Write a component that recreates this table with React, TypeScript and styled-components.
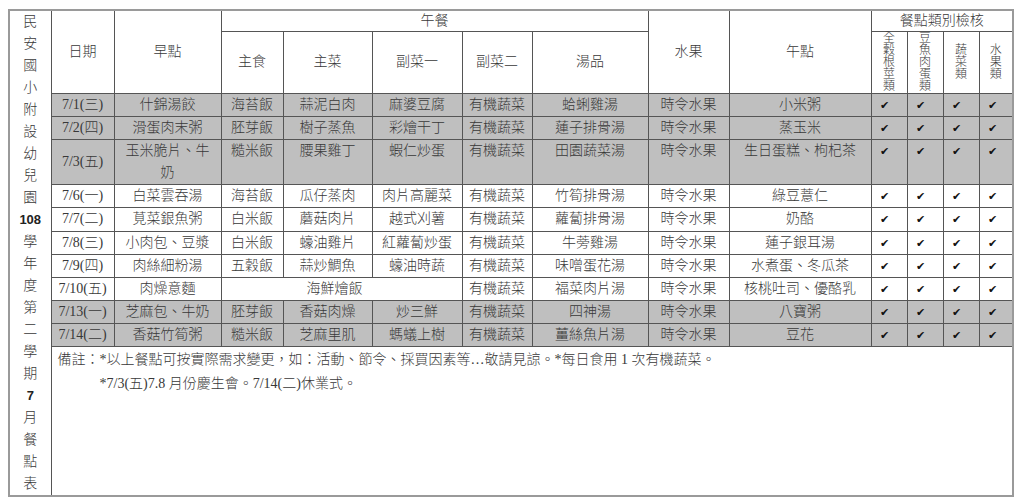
import React from 'react';
import styled, { createGlobalStyle } from 'styled-components';

type MenuRow = {
  date: string;
  breakfast: string;
  staple?: string;
  main?: string;
  side1?: string;
  merged?: string;
  side2: string;
  soup: string;
  fruit: string;
  snack: string;
  shaded?: boolean;
  tall?: boolean;
};

const rows: MenuRow[] = [
  { date: '7/1(三)', breakfast: '什錦湯餃', staple: '海苔飯', main: '蒜泥白肉', side1: '麻婆豆腐', side2: '有機蔬菜', soup: '蛤蜊雞湯', fruit: '時令水果', snack: '小米粥', shaded: true },
  { date: '7/2(四)', breakfast: '滑蛋肉末粥', staple: '胚芽飯', main: '樹子蒸魚', side1: '彩燴干丁', side2: '有機蔬菜', soup: '蓮子排骨湯', fruit: '時令水果', snack: '蒸玉米', shaded: true },
  { date: '7/3(五)', breakfast: '玉米脆片、牛|奶', staple: '糙米飯', main: '腰果雞丁', side1: '蝦仁炒蛋', side2: '有機蔬菜', soup: '田園蔬菜湯', fruit: '時令水果', snack: '生日蛋糕、枸杞茶', shaded: true, tall: true },
  { date: '7/6(一)', breakfast: '白菜雲吞湯', staple: '海苔飯', main: '瓜仔蒸肉', side1: '肉片高麗菜', side2: '有機蔬菜', soup: '竹筍排骨湯', fruit: '時令水果', snack: '綠豆薏仁' },
  { date: '7/7(二)', breakfast: '莧菜銀魚粥', staple: '白米飯', main: '蘑菇肉片', side1: '越式刈薯', side2: '有機蔬菜', soup: '蘿蔔排骨湯', fruit: '時令水果', snack: '奶酪' },
  { date: '7/8(三)', breakfast: '小肉包、豆漿', staple: '白米飯', main: '蠔油雞片', side1: '紅蘿蔔炒蛋', side2: '有機蔬菜', soup: '牛蒡雞湯', fruit: '時令水果', snack: '蓮子銀耳湯' },
  { date: '7/9(四)', breakfast: '肉絲細粉湯', staple: '五穀飯', main: '蒜炒鯛魚', side1: '蠔油時蔬', side2: '有機蔬菜', soup: '味噌蛋花湯', fruit: '時令水果', snack: '水煮蛋、冬瓜茶' },
  { date: '7/10(五)', breakfast: '肉燥意麵', merged: '海鮮燴飯', side2: '有機蔬菜', soup: '福菜肉片湯', fruit: '時令水果', snack: '核桃吐司、優酪乳' },
  { date: '7/13(一)', breakfast: '芝麻包、牛奶', staple: '胚芽飯', main: '香菇肉燥', side1: '炒三鮮', side2: '有機蔬菜', soup: '四神湯', fruit: '時令水果', snack: '八寶粥', shaded: true },
  { date: '7/14(二)', breakfast: '香菇竹筍粥', staple: '糙米飯', main: '芝麻里肌', side1: '螞蟻上樹', side2: '有機蔬菜', soup: '薑絲魚片湯', fruit: '時令水果', snack: '豆花', shaded: true },
];

const titleChars = ['民', '安', '國', '小', '附', '設', '幼', '兒', '園', '108', '學', '年', '度', '第', '二', '學', '期', '7', '月', '餐', '點', '表'];
const colWidths = [42, 63, 107, 62, 89, 90, 70, 116, 81, 142, 36, 36, 36, 34];
const checkGroups = ['全穀根莖類', '豆魚肉蛋類', '蔬菜類', '水果類'];

function lines(text: string) {
  return text.split('|').map((part, i) => (
    <React.Fragment key={i}>
      {i > 0 && <br />}
      {part}
    </React.Fragment>
  ));
}

function App() {
  return (
    <>
      <GlobalStyle />
      <MenuTable>
        <colgroup>
          {colWidths.map((w, i) => (
            <col key={i} style={{ width: w }} />
          ))}
        </colgroup>
        <tbody>
          <HeadRow $height={21}>
            <TitleCell rowSpan={13}>
              {titleChars.map((c, i) =>
                /\d/.test(c) ? <TitleNum key={i}>{c}</TitleNum> : <TitleChar key={i}>{c}</TitleChar>
              )}
            </TitleCell>
            <HeadCell rowSpan={2}>
              <HeadLine>日期</HeadLine>
            </HeadCell>
            <HeadCell rowSpan={2}>
              <HeadLine>早點</HeadLine>
            </HeadCell>
            <HeadCell colSpan={5}>
              <HeadLine>午餐</HeadLine>
            </HeadCell>
            <HeadCell rowSpan={2}>
              <HeadLine>水果</HeadLine>
            </HeadCell>
            <HeadCell rowSpan={2}>
              <HeadLine>午點</HeadLine>
            </HeadCell>
            <HeadCell colSpan={4}>
              <HeadLine>餐點類別檢核</HeadLine>
            </HeadCell>
          </HeadRow>
          <HeadRow $height={60}>
            <HeadCell>
              <HeadLine>主食</HeadLine>
            </HeadCell>
            <HeadCell>
              <HeadLine>主菜</HeadLine>
            </HeadCell>
            <HeadCell>
              <HeadLine>副菜一</HeadLine>
            </HeadCell>
            <HeadCell>
              <HeadLine>副菜二</HeadLine>
            </HeadCell>
            <HeadCell>
              <HeadLine>湯品</HeadLine>
            </HeadCell>
            {checkGroups.map((g) => (
              <GroupCell key={g}>
                <Stacked>{g}</Stacked>
              </GroupCell>
            ))}
          </HeadRow>
          {rows.map((r) => (
            <DataRow key={r.date} $shaded={r.shaded} $height={r.tall ? 44 : 22}>
              <DateCell>
                <Line>{r.date}</Line>
              </DateCell>
              <Cell>
                <Line $count={r.breakfast.split('|').length}>{lines(r.breakfast)}</Line>
              </Cell>
              {r.merged ? (
                <Cell colSpan={3} $shift>
                  <Line>{r.merged}</Line>
                </Cell>
              ) : (
                <>
                  <Cell>
                    <Line>{r.staple}</Line>
                  </Cell>
                  <Cell>
                    <Line>{r.main}</Line>
                  </Cell>
                  <Cell>
                    <Line>{r.side1}</Line>
                  </Cell>
                </>
              )}
              <Cell>
                <Line>{r.side2}</Line>
              </Cell>
              <Cell>
                <Line>{r.soup}</Line>
              </Cell>
              <Cell>
                <Line>{r.fruit}</Line>
              </Cell>
              <Cell>
                <Line>{r.snack}</Line>
              </Cell>
              {checkGroups.map((g) => (
                <CheckCell key={g}>
                  <Line>
                    <Check>✔</Check>
                  </Line>
                </CheckCell>
              ))}
            </DataRow>
          ))}
          <NoteRow>
            <NoteCell colSpan={13}>
              <NoteLine>備註：*以上餐點可按實際需求變更，如：活動、節令、採買因素等…敬請見諒。*每日食用 1 次有機蔬菜。</NoteLine>
              <NoteLine $indent>*7/3(五)7.8 月份慶生會。7/14(二)休業式。</NoteLine>
            </NoteCell>
          </NoteRow>
        </tbody>
      </MenuTable>
    </>
  );
}

const GlobalStyle = createGlobalStyle`
  body {
    margin: 8px;
    background: #ffffff;
    font-family: 'Liberation Serif', 'Noto Sans CJK TC', serif;
    font-weight: 300;
    color: #383838;
  }
`;
const MenuTable = styled.table`
  border-collapse: collapse;
  table-layout: fixed;
  width: 1004px;
  margin-top: 1px;
  border: 2px solid #9a9a9a;
  font-size: 14px;
`;
const HeadRow = styled.tr<{ $height: number }>`
  height: ${(p) => p.$height}px;
  background: #ffffff;
`;
const Line = styled.div<{ $count?: number }>`
  height: ${(p) => (p.$count ?? 1) * 22}px;
  line-height: 22px;
  white-space: nowrap;
`;
const HeadLine = styled.div`
  height: 20px;
  line-height: 20px;
  white-space: nowrap;
`;
const TitleCell = styled.td`
  border: 1px solid #555;
  border-left: 2px solid #9a9a9a;
  background: #ffffff;
  vertical-align: top;
  text-align: center;
  padding: 0;
`;
const TitleChar = styled.div`
  height: 22px;
  line-height: 21px;
  font-size: 14px;
`;
const TitleNum = styled(TitleChar)`
  font-family: 'Liberation Sans', sans-serif;
  font-weight: bold;
  font-size: 13px;
  color: #222;
`;
const HeadCell = styled.td`
  border: 1px solid #555;
  text-align: center;
  vertical-align: middle;
  padding: 0;
`;
const GroupCell = styled.td`
  border: 1px solid #555;
  text-align: center;
  vertical-align: middle;
  padding: 0;
`;
const Stacked = styled.div`
  width: 12px;
  height: 60px;
  display: flex;
  flex-direction: column;
  justify-content: center;
  margin: 0 auto;
  font-size: 12px;
  line-height: 12px;
  word-break: break-all;
  white-space: normal;
`;
const DataRow = styled.tr<{ $shaded?: boolean; $height: number }>`
  height: ${(p) => p.$height}px;
  background: ${(p) => (p.$shaded ? '#bfbfbf' : '#ffffff')};
`;
const Cell = styled.td<{ $shift?: boolean }>`
  border: 1px solid #555;
  text-align: center;
  vertical-align: top;
  padding: 0 ${(p) => (p.$shift ? '16px' : '2px')} 0 2px;
`;
const DateCell = styled(Cell)`
  vertical-align: middle;
`;
const CheckCell = styled.td`
  border: 1px solid #555;
  vertical-align: top;
  text-align: left;
  padding: 0 0 0 8px;
`;
const Check = styled.span`
  font-family: 'DejaVu Sans', sans-serif;
  font-size: 11px;
  color: #111;
`;
const NoteRow = styled.tr`
  height: 148px;
  background: #ffffff;
`;
const NoteCell = styled.td`
  border: 1px solid #555;
  border-right: 2px solid #9a9a9a;
  border-bottom: 2px solid #9a9a9a;
  vertical-align: top;
  padding: 1px 6px 0;
`;
const NoteLine = styled.div<{ $indent?: boolean }>`
  height: 24px;
  line-height: 24px;
  padding-left: ${(p) => (p.$indent ? '42px' : '0')};
  white-space: nowrap;
`;

export default App;
